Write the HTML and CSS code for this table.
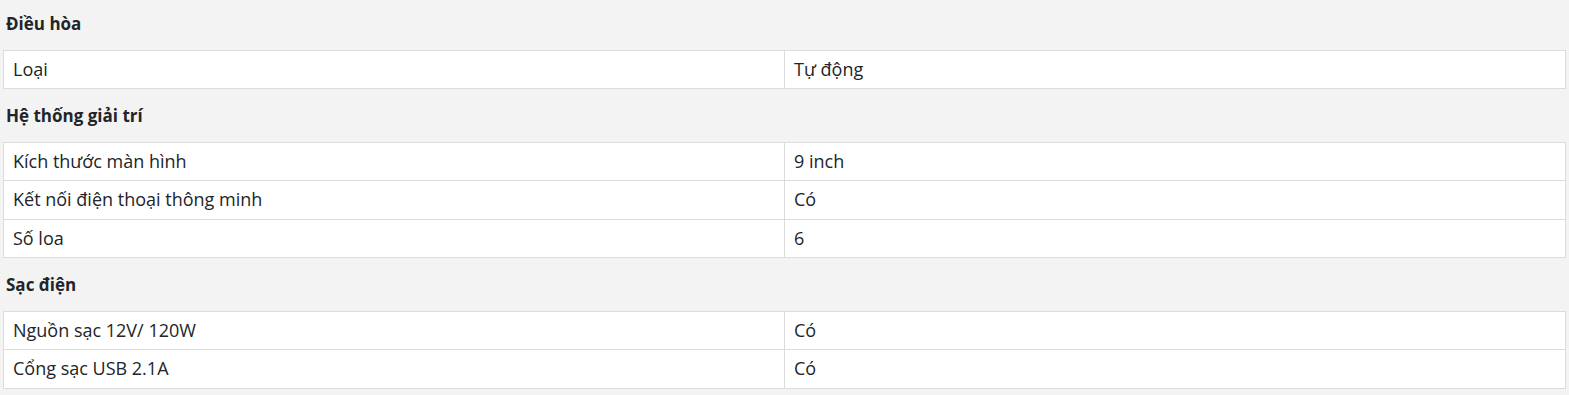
FILE: index.html
```html
<!DOCTYPE html>
<html lang="vi">
<head>
<meta charset="utf-8">
<link rel="stylesheet" href="styles.css">
</head>
<body>
<div class="specs">
  <h3 class="group-title first">Điều hòa</h3>
  <table class="spec-table">
    <tr><td>Loại</td><td>Tự động</td></tr>
  </table>
  <h3 class="group-title">Hệ thống giải trí</h3>
  <table class="spec-table">
    <tr><td>Kích thước màn hình</td><td>9 inch</td></tr>
    <tr><td>Kết nối điện thoại thông minh</td><td>Có</td></tr>
    <tr><td>Số loa</td><td>6</td></tr>
  </table>
  <h3 class="group-title">Sạc điện</h3>
  <table class="spec-table">
    <tr><td>Nguồn sạc 12V/ 120W</td><td>Có</td></tr>
    <tr><td>Cổng sạc USB 2.1A</td><td>Có</td></tr>
  </table>
</div>
</body>
</html>
```
FILE: styles.css
```css
html, body {
  margin: 0;
  padding: 0;
  background: #f3f3f3;
}
body {
  font-family: "Open Sans", "Noto Sans", sans-serif;
  color: #212529;
}
.specs {
  padding: 0 3px;
}
.group-title {
  margin: 0;
  font-size: 17px;
  font-weight: 700;
  line-height: 25.5px;
  padding: 14px 3px 13px;
}
.group-title.first {
  padding-top: 11px;
}
.spec-table {
  width: 100%;
  border-collapse: collapse;
  background: #fff;
  table-layout: fixed;
}
.spec-table td {
  width: 50%;
  border: 1px solid #dcdcdc;
  font-size: 18px;
  line-height: 25.5px;
  padding: 6px 9px;
}
```
